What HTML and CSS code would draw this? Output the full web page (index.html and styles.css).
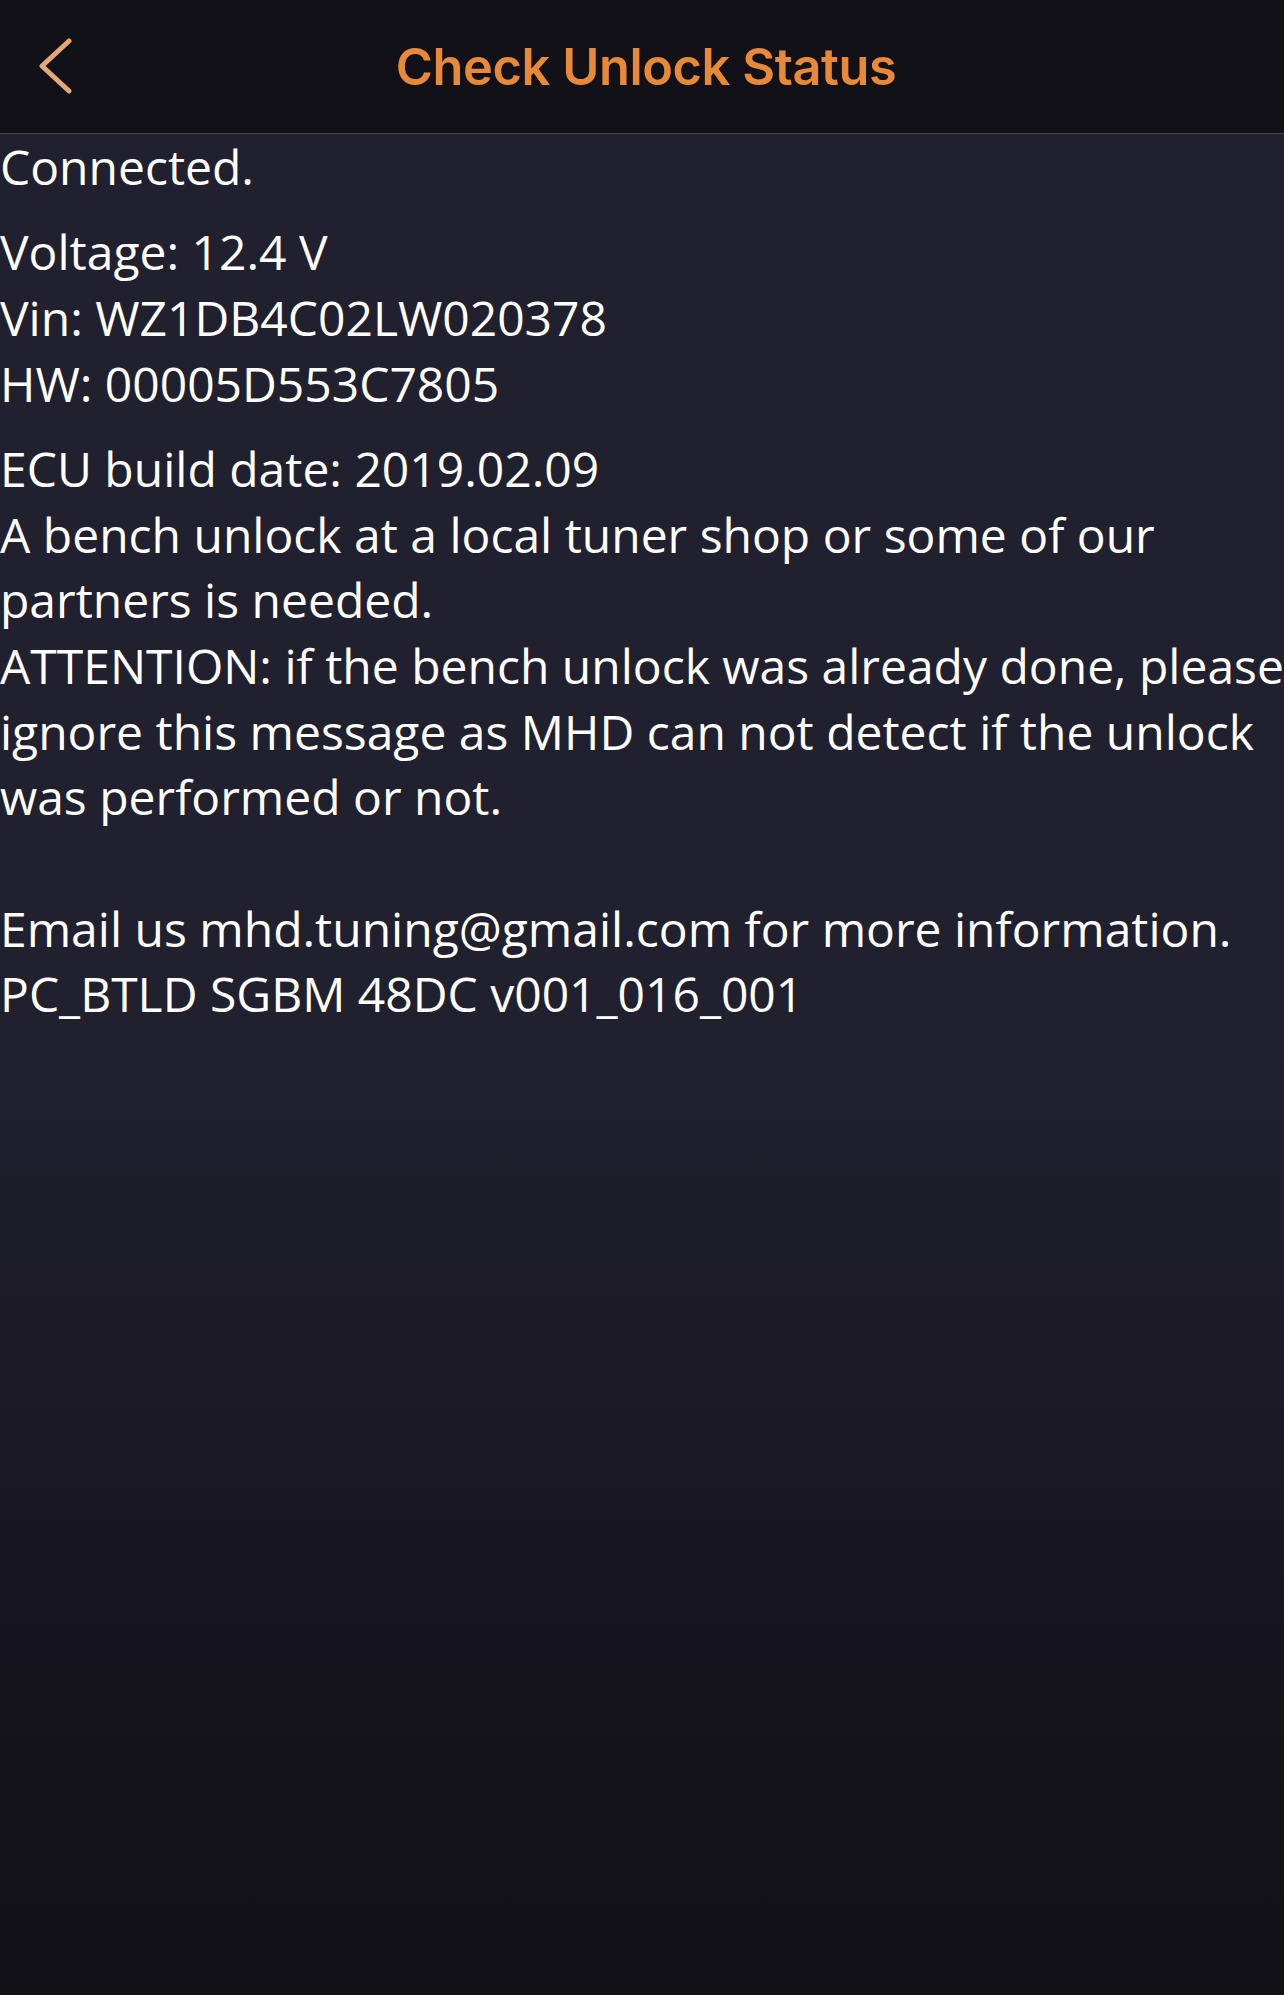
FILE: index.html
```html
<!DOCTYPE html>
<html lang="en">
<head>
<meta charset="utf-8">
<title>Check Unlock Status</title>
<link rel="stylesheet" href="styles.css">
</head>
<body>
<div class="screen">
  <header class="navbar">
    <button class="back" aria-label="Back">
      <svg width="40" height="64" viewBox="0 0 40 64">
        <polyline points="30,9 3,34 30,59" fill="none" stroke="#e3a878" stroke-width="5" stroke-linecap="round" stroke-linejoin="round"/>
      </svg>
    </button>
    <h1 class="title">Check Unlock Status</h1>
  </header>
  <main class="content">
    <p class="para">Connected.</p>
    <p class="para">Voltage: 12.4 V<br>Vin: WZ1DB4C02LW020378<br>HW: 00005D553C7805</p>
    <p class="para">ECU build date: 2019.02.09<br>A bench unlock at a local tuner shop or some of our partners is needed.<br>ATTENTION: if the bench unlock was already done, please ignore this message as MHD can not detect if the unlock was performed or not.<br><br>Email us mhd.tuning@gmail.com for more information.<br>PC_BTLD SGBM 48DC v001_016_001</p>
  </main>
</div>
</body>
</html>
```
FILE: styles.css
```css
html, body {
  margin: 0;
  padding: 0;
  background: #121117;
}
.screen {
  width: 1284px;
  height: 1995px;
  display: flex;
  flex-direction: column;
  overflow: hidden;
}
.navbar {
  height: 133px;
  flex: none;
  background: #121117;
  border-bottom: 1px solid #46454f;
  display: flex;
  align-items: center;
  justify-content: center;
  position: relative;
}
.back {
  position: absolute;
  left: 39px;
  top: 32px;
  padding: 0;
  margin: 0;
  border: 0;
  background: none;
  width: 40px;
  height: 64px;
}
.back svg { display: block; }
.title {
  margin: 0 0 0 8px;
  font-family: "Inter", "Liberation Sans", sans-serif;
  font-weight: 600;
  font-size: 50.5px;
  letter-spacing: -0.4px;
  color: #e8893a;
}
.content {
  flex: 1;
  background: linear-gradient(to bottom, #21202e 0px, #21202e 900px, #1b1a26 1250px, #131218 1680px, #121117 1861px);
  font-family: "Open Sans", "Noto Sans", sans-serif;
  font-size: 48px;
  line-height: 65.7px;
  color: #ffffff;
  padding-top: 0;
}
.para {
  margin: 0 0 19.5px 0;
}
```
